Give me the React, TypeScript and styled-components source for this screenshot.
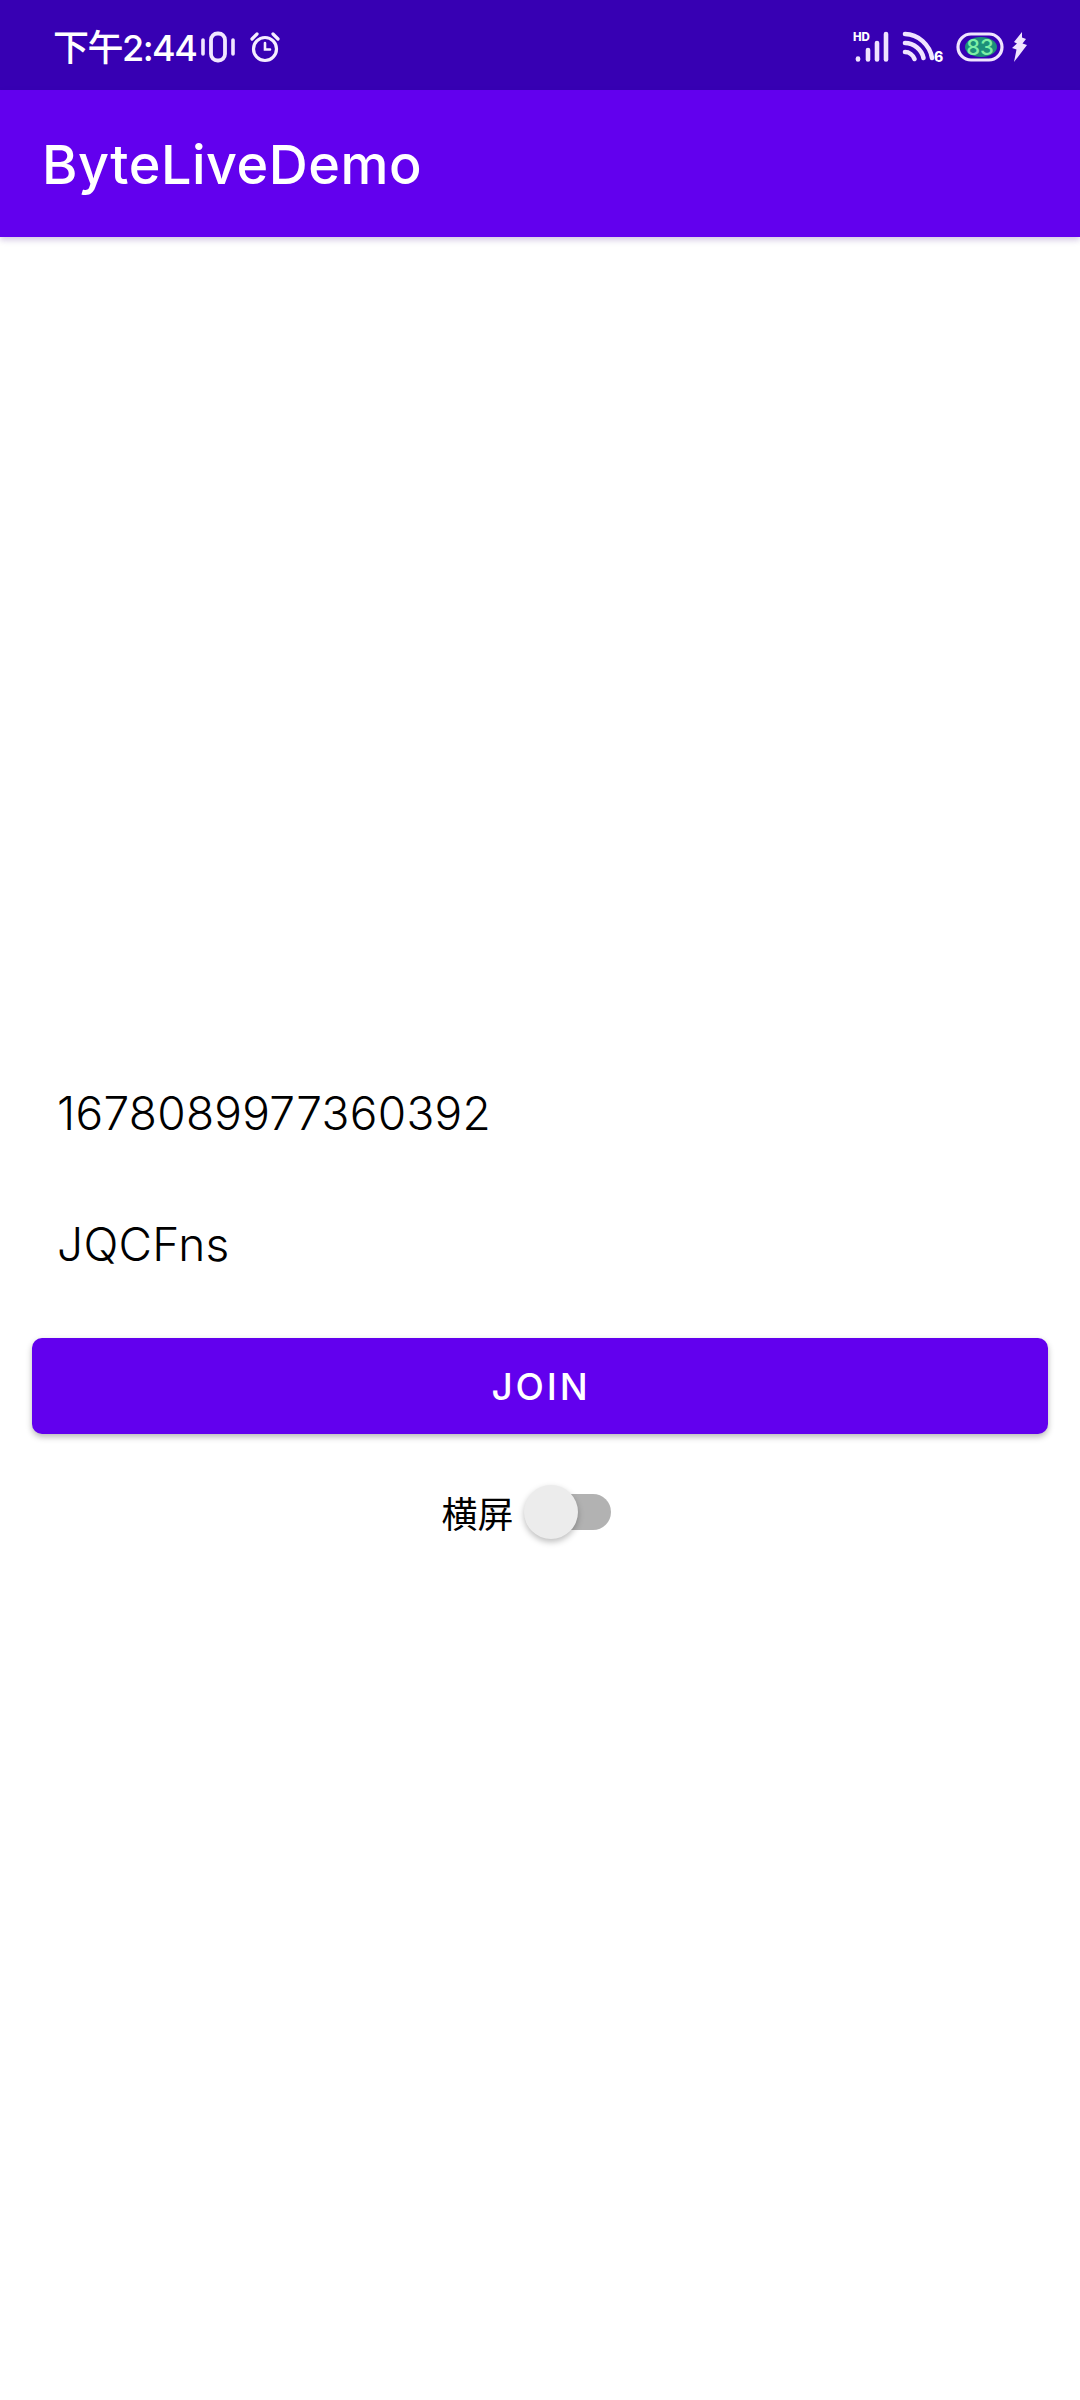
import React from "react";
import styled, { createGlobalStyle } from "styled-components";

const Global = createGlobalStyle`
  html, body { margin: 0; padding: 0; background: #fff; }
  body { font-family: Inter, "Noto Sans CJK SC", sans-serif; }
  #root { width: 1080px; height: 2400px; }
`;

const Page = styled.div`
  width: 1080px;
  height: 2400px;
  display: flex;
  flex-direction: column;
  background: #fff;
  overflow: hidden;
`;

const StatusBar = styled.div`
  height: 90px;
  flex: none;
  background: #3700b3;
  display: flex;
  align-items: center;
  justify-content: space-between;
  padding: 0 52px 0 53px;
  color: #fff;
  box-sizing: border-box;
`;

const StatusGroup = styled.div`
  display: flex;
  align-items: center;
`;

const Clock = styled.span`
  font-family: Inter, "Noto Sans CJK SC", sans-serif;
  font-size: 36px;
  font-weight: 500;
  letter-spacing: -1.5px;
  line-height: 46px;
  margin-top: 6px;
  color: #fff;
`;

const Icon = styled.svg<{ $left?: number; $top?: number }>`
  display: block;
  flex: none;
  overflow: visible;
  margin-left: ${(p) => p.$left ?? 0}px;
  margin-top: ${(p) => p.$top ?? 0}px;
`;

const SmallLabel = styled.text`
  font-family: Inter, sans-serif;
  font-weight: 800;
  fill: #fff;
`;

const BatteryLabel = styled.text`
  font-family: Inter, sans-serif;
  font-weight: 500;
  font-size: 22px;
  fill: #7df0a6;
`;

const AppBar = styled.header`
  height: 147px;
  flex: none;
  box-sizing: border-box;
  background: #6200ee;
  display: flex;
  align-items: center;
  padding: 2px 0 0 42px;
  box-shadow: 0 3px 6px rgba(60, 0, 130, 0.22);
`;

const Title = styled.h1`
  margin: 0;
  font-family: Inter, sans-serif;
  font-size: 54px;
  font-weight: 500;
  letter-spacing: 0.5px;
  color: #fff;
`;

const Main = styled.main`
  display: flex;
  flex-direction: column;
  padding: 810px 32px 0;
`;

const Field = styled.div`
  height: 131px;
  display: flex;
  align-items: center;
  padding-left: 25px;
  font-family: Inter, sans-serif;
  font-size: 46px;
  font-weight: 350;
  letter-spacing: 0.3px;
  color: #000;
`;

const JoinButton = styled.button`
  margin-top: 29px;
  height: 96px;
  padding: 0 0 0 2px;
  border: 0;
  border-radius: 10px;
  background: #6200ee;
  color: #fff;
  font-family: Inter, sans-serif;
  font-size: 37px;
  font-weight: 500;
  letter-spacing: 2.8px;
  box-shadow: 0 3px 6px rgba(0, 0, 0, 0.28);
`;

const ToggleRow = styled.div`
  margin-top: 51px;
  display: flex;
  align-items: center;
  justify-content: center;
  padding-right: 28px;
`;

const ToggleLabel = styled.span`
  font-family: "Noto Sans CJK SC", sans-serif;
  font-size: 36px;
  line-height: 54px;
  color: #000;
  margin-right: 9px;
`;

const Toggle = styled.div`
  position: relative;
  width: 88px;
  height: 36px;
`;

const ToggleTrack = styled.div`
  position: absolute;
  left: 22px;
  top: 0;
  right: 0;
  bottom: 0;
  border-radius: 18px;
  background: #b2b2b2;
`;

const ToggleThumb = styled.div`
  position: absolute;
  left: 1px;
  top: -9px;
  width: 54px;
  height: 54px;
  border-radius: 50%;
  background: #ececec;
  box-shadow: 0 3px 6px rgba(0, 0, 0, 0.26);
`;

export default function App() {
  return (
    <Page>
      <Global />
      <StatusBar>
        <StatusGroup>
          <Clock>下午2:44</Clock>
          <Icon $left={5} $top={4} width="34" height="32" viewBox="0 0 34 32" fill="none" stroke="#f1e6ff">
            <path d="M2 9v14M32 9v14" strokeWidth="3.6" strokeLinecap="round" />
            <rect x="10" y="2.5" width="14" height="27" rx="6.5" strokeWidth="3.8" />
          </Icon>
          <Icon $left={14} $top={4} width="32" height="32" viewBox="0 0 32 32" fill="none" stroke="#f5edff" strokeLinecap="round">
            <circle cx="16" cy="18" r="11.5" strokeWidth="3.2" />
            <path d="M16 12v6.5h5" strokeWidth="2.6" />
            <path d="M3 8l5-5M29 8l-5-5" strokeWidth="3.2" />
          </Icon>
        </StatusGroup>
        <StatusGroup>
          <Icon $top={4} width="36" height="32" viewBox="0 0 36 32">
            <SmallLabel x="0" y="10" fontSize="11.5">HD</SmallLabel>
            <g fill="none" stroke="#f0e4ff" strokeWidth="4.6" strokeLinecap="round">
              <path d="M5 27.5v1" />
              <path d="M15 19v9.5" />
              <path d="M24 12v16.5" />
              <path d="M33 3v25.5" />
            </g>
          </Icon>
          <Icon $left={13} $top={4} width="45" height="32" viewBox="0 0 45 32">
            <g fill="none" stroke="#f0e4ff" strokeWidth="4.6" strokeLinecap="round">
              <path d="M3 3c13 0 25 11 27 24" />
              <path d="M3 12c9 0 17 7 18.5 15" />
              <path d="M3 21c4 0 8 3 9.5 7" />
            </g>
            <SmallLabel x="32" y="31" fontSize="14">6</SmallLabel>
          </Icon>
          <Icon $left={9} $top={4} width="48" height="30" viewBox="0 0 48 30">
            <rect x="2" y="2" width="44" height="26" rx="13" fill="none" stroke="#f0e4ff" strokeWidth="3.2" />
            <ellipse cx="25" cy="15" rx="16" ry="10" fill="#1c8f7a" />
            <BatteryLabel x="24" y="23" textAnchor="middle">83</BatteryLabel>
          </Icon>
          <Icon $left={7} $top={4} width="17" height="30" viewBox="0 0 17 30">
            <path d="M11 0L3 10l3 1.5L1 16l4.5 1.5L3 30 16 13l-4.5-1.5L15 7l-4-1.5z" fill="#f0e4ff" />
          </Icon>
        </StatusGroup>
      </StatusBar>
      <AppBar>
        <Title>ByteLiveDemo</Title>
      </AppBar>
      <Main>
        <Field>1678089977360392</Field>
        <Field>JQCFns</Field>
        <JoinButton>JOIN</JoinButton>
        <ToggleRow>
          <ToggleLabel>横屏</ToggleLabel>
          <Toggle>
            <ToggleTrack />
            <ToggleThumb />
          </Toggle>
        </ToggleRow>
      </Main>
    </Page>
  );
}
